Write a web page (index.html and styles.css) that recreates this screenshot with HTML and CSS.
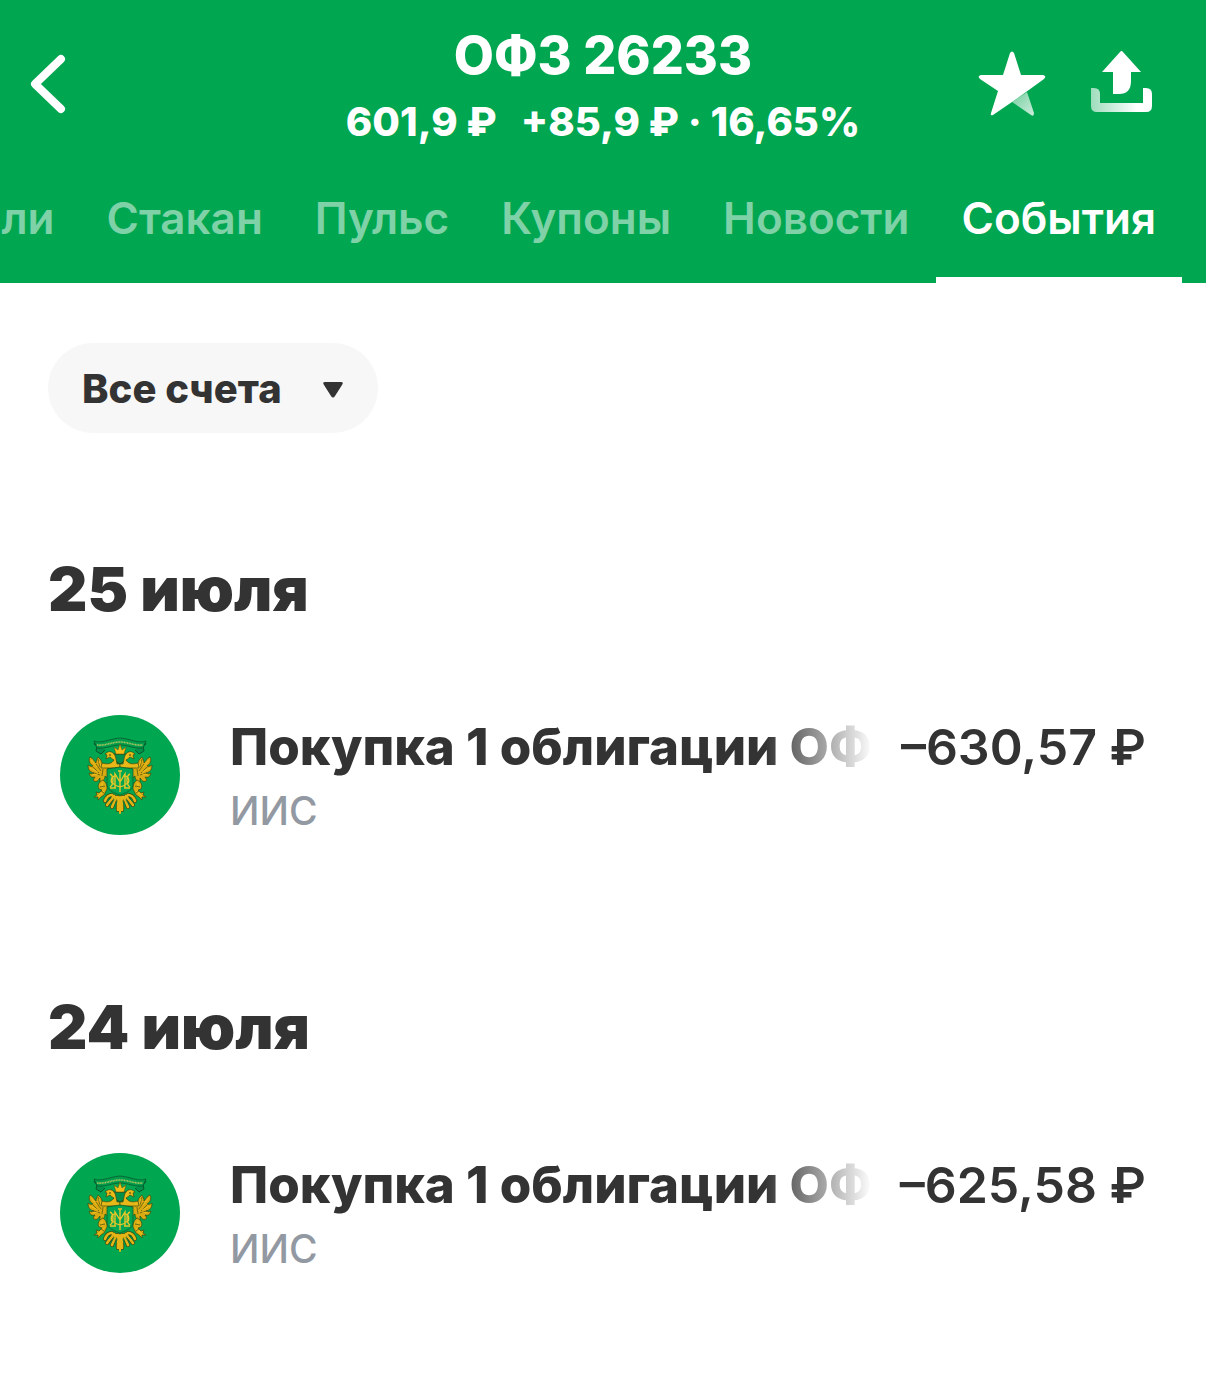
FILE: index.html
```html
<!doctype html>
<html lang="ru">
  <head>
    <meta charset="UTF-8" />
    <meta name="viewport" content="width=device-width, initial-scale=1.0" />
    <title>ОФЗ 26233</title>
    <link rel="stylesheet" href="styles.css">
  </head>
  <body>
    <!-- Shared emblem, the right half mirrors the left one -->
    <svg class="sprite" aria-hidden="true">
      <defs>
        <g id="emblem-half" stroke="#3b4a12" stroke-width="0.7" stroke-linejoin="round">
          <path fill="#d9a911" d="M48 51C44 52 42 49 41 45L38 42C37 44 36 46 36 48C34 46 33 43 30 42C28 46 30 49 33 51C31 52 30 51 28 50C28 55 30 57 34 58C32 59 31 59 29 58C30 62 32 63 35 62L33 65C36 68 38 66 40 63L40 67C43 67 45 64 45 61L48 63Z" />
          <path fill="none" stroke="#4c5210" d="M36 49L41 56M33 52L39 58M34 58L40 60M38 44L40 52M43 54L42 61" />
          <path fill="none" stroke="#f5cb25" d="M31 45L37 52M30 53L38 57M32 60L38 59M39 46L42 54" />
          <path fill="#e8b718" d="M60 53C53 53 48 53 41 53L42 48C49 50 52 48 54 45C52 44 51 43 50 42L46 44L47 40L45 39C48 36 52 36 54 39C56 41 56 45 57 49L60 49Z" />
          <circle cx="50" cy="40" r="0.8" fill="#16341a" stroke="none" />
          <path fill="none" stroke="#f5cb25" d="M48 38C50 37 53 39 54 43" />
          <path fill="#dcae13" d="M43 65C39 67 37 70 39 74L42 75L39 78L36 77L37 80L34 82L38 82L38 85L41 82L44 80L46 76C48 73 47 68 43 65Z" />
          <path fill="none" stroke="#f5cb25" d="M42 68L42 73M38 81L44 76" />
          <path fill="none" stroke="#3f4a10" d="M40 72L45 71M41 76L44 78" />
          <g fill="none" stroke-linecap="round">
            <path stroke-width="4" d="M58 82L58 95M56 82L52 92M54 81L47 90M52 80C48 80 46 83 45 86" />
            <path stroke="#e3b416" stroke-width="2.6" d="M58 82L58 95M56 82L52 92M54 81L47 90M52 80C48 80 46 83 45 86" />
            <path stroke="#00873f" stroke-width="0.8" d="M57 86L55 94M54 85L50 91M51 83L46 88" />
          </g>
        </g>
        <g id="emblem">
          <path fill="#00924a" stroke="#09592d" d="M38 29C33 26 33 30 37 31L36 36L41 39L45 35M82 29C87 26 87 30 83 31L84 36L79 39L75 35" />
          <path fill="#009d4d" stroke="#09592d" stroke-width="0.8" d="M34 26C41 29 49 24 60 23C71 24 79 29 86 26L83 33C74 34 68 30 60 30C52 30 46 34 37 33Z" />
          <path fill="none" stroke="#b3c65e" stroke-width="1.6" stroke-dasharray="1.1 0.5" d="M37 30C45 31 52 27 60 27C68 27 75 31 83 30" />
          <path fill="#00904a" stroke="#21511d" d="M54 39H66L65 46L60 49L55 46Z" />
          <use href="#emblem-half" />
          <use href="#emblem-half" transform="translate(120 0) scale(-1 1)" />
          <path fill="none" stroke="#e3b416" stroke-width="2" stroke-linecap="round" d="M60 82V98" />
          <path fill="#f3bd17" stroke="#60530e" stroke-width="0.5" d="M56 39L54 32L58 35L60 29L62 35L66 32L64 39Z" />
          <path fill="#00a651" stroke="#12602a" stroke-width="0.8" d="M47 54L60 52L73 54V69C73 75 68 77 60 80C52 77 47 75 47 69Z" />
          <g fill="none" stroke="#e5c62a" stroke-width="1.4">
            <path d="M60 56V77M58 56H62M55 73V59L60 67L65 59V73M50 73H56M64 73H70" />
            <path d="M50 59C54 61 54 69 50 72M70 59C66 61 66 69 70 72M55 61C50 62 50 69 55 69M65 61C70 62 70 69 65 69M55 70C58 72 62 72 65 70" />
          </g>
        </g>
      </defs>
    </svg>

    <header class="header">
      <div class="topbar">
        <button class="icon-button" type="button" aria-label="Назад">
          <svg width="42" height="64" viewBox="0 0 42 64">
            <path d="M33 7L7 32L33 57" fill="none" stroke="#fff" stroke-width="8" stroke-linecap="round" stroke-linejoin="round" />
          </svg>
        </button>
        <div class="heading">
          <h1 class="title">ОФЗ 26233</h1>
          <p class="quote"><span>601,9 ₽</span><span>+85,9 ₽ · 16,65%</span></p>
        </div>
        <div class="actions">
          <button class="icon-button" type="button" aria-label="В избранное">
            <svg width="68" height="68" viewBox="0 0 68 68">
              <defs>
                <linearGradient id="star-fold" x1="0" y1="0" x2="1" y2="1">
                  <stop offset="0" stop-color="#fff" stop-opacity="0.45" />
                  <stop offset="1" stop-color="#fff" stop-opacity="0.8" />
                </linearGradient>
              </defs>
              <path fill="url(#star-fold)" d="M49 42L56 63Q56 67 53 65L34 52Z" />
              <path fill="#fff" d="M32 3Q34 0 36 3L43 25H65Q69 26 66 29L34 52L15 65Q12 66 13 63L20 41L2 29Q-1 26 3 25H25Z" />
            </svg>
          </button>
          <button class="icon-button" type="button" aria-label="Поделиться">
            <svg width="64" height="68" viewBox="0 0 64 68">
              <defs>
                <linearGradient id="tray" x1="0" y1="0" x2="1" y2="0">
                  <stop offset="0" stop-color="#fff" stop-opacity="0.62" />
                  <stop offset="0.75" stop-color="#fff" />
                </linearGradient>
              </defs>
              <path fill="url(#tray)" d="M1 38H4Q10 38 10 44V53H53V38H56Q62 38 62 44V56Q62 62 56 62H7Q1 62 1 56Z" />
              <path fill="#fff" d="M30 2Q31.500 0 33 2L51 22H41V31Q41 44 29 44H23V22H12Z" />
            </svg>
          </button>
        </div>
      </div>
      <nav class="tabs">
        <a class="tab" href="#">ли</a>
        <a class="tab" href="#">Стакан</a>
        <a class="tab" href="#">Пульс</a>
        <a class="tab" href="#">Купоны</a>
        <a class="tab" href="#">Новости</a>
        <a class="tab tab-active" href="#" aria-current="page">События</a>
      </nav>
    </header>

    <main class="content">
      <div class="filter">
        <select class="filter-select" aria-label="Счет">
          <option>Все счета</option>
        </select>
        <svg class="filter-arrow" width="22" height="18" viewBox="0 0 22 18" aria-hidden="true">
          <path fill="#333" d="M3 1H19Q22 1 20 4L13 15Q11 18 9 15L2 4Q0 1 3 1Z" />
        </svg>
      </div>

      <section class="day">
        <h2 class="day-title">25 июля</h2>
        <article class="event">
          <svg class="event-logo" viewBox="0 0 120 120" aria-hidden="true"><use href="#emblem" /></svg>
          <div class="event-info">
            <h3 class="event-name">Покупка 1 облигации ОФ</h3>
            <p class="event-account">ИИС</p>
          </div>
          <p class="event-amount">–630,57 ₽</p>
        </article>
      </section>

      <section class="day">
        <h2 class="day-title">24 июля</h2>
        <article class="event">
          <svg class="event-logo" viewBox="0 0 120 120" aria-hidden="true"><use href="#emblem" /></svg>
          <div class="event-info">
            <h3 class="event-name">Покупка 1 облигации ОФ</h3>
            <p class="event-account">ИИС</p>
          </div>
          <p class="event-amount">–625,58 ₽</p>
        </article>
      </section>
    </main>
  </body>
</html>
```
FILE: styles.css
```css
body {
  margin: 0;
  font-family: Inter, "Liberation Sans", sans-serif;
  background-color: #fff;
  color: #333;
}

h1,
h2,
h3,
p {
  margin: 0;
}

.sprite {
  position: absolute;
  width: 0;
  height: 0;
}

.header {
  background-color: #00a650;
  color: #fff;
  overflow: hidden;
}

.topbar {
  display: grid;
  grid-template-columns: 1fr auto 1fr;
  align-items: start;
  padding: 24px 52px 0 28px;
}

.icon-button {
  display: flex;
  align-items: center;
  justify-self: start;
  height: 120px;
  padding: 0;
  border: none;
  background: none;
  cursor: pointer;
}

.heading {
  text-align: center;
  padding-left: 24px;
}

.title {
  font-size: 52px;
  line-height: 64px;
  font-weight: 800;
}

.quote {
  display: flex;
  justify-content: center;
  gap: 24px;
  font-size: 40px;
  line-height: 68px;
  font-weight: 800;
  white-space: nowrap;
}

.actions {
  display: flex;
  justify-content: flex-end;
  gap: 44px;
}

.tabs {
  display: flex;
  justify-content: flex-end;
  padding: 22px 24px 0 0;
}

.tab {
  flex: none;
  padding: 12px 26px 31px;
  border-bottom: 6px solid transparent;
  color: rgba(255, 255, 255, 0.5);
  font-size: 44px;
  line-height: 56px;
  font-weight: 600;
  text-decoration: none;
}

.tab-active {
  border-bottom-color: #fff;
  color: #fff;
}

.content {
  padding: 60px 60px 60px 48px;
}

.filter {
  display: inline-grid;
  align-items: center;
}

.filter-select,
.filter-arrow {
  grid-area: 1 / 1;
}

.filter-select {
  appearance: none;
  height: 90px;
  padding: 0 96px 0 34px;
  border: none;
  border-radius: 45px;
  background-color: #f7f7f7;
  color: #333;
  font-family: inherit;
  font-size: 40px;
  font-weight: 800;
}

.filter-arrow {
  justify-self: end;
  margin: 4px 34px 0 0;
  pointer-events: none;
}

.day {
  padding-top: 120px;
}

.day-title {
  font-size: 61px;
  line-height: 72px;
  font-weight: 900;
}

.event {
  display: flex;
  align-items: flex-start;
  padding: 90px 0 28px 12px;
}

.event-logo {
  flex: none;
  width: 120px;
  height: 120px;
  margin-right: 50px;
  border-radius: 50%;
  background-color: #00a650;
}

.event-info {
  flex: 1;
  min-width: 0;
}

.event-name {
  overflow: hidden;
  font-size: 51px;
  line-height: 64px;
  font-weight: 800;
  white-space: nowrap;
  -webkit-mask-image: linear-gradient(to left, transparent, #000 108px);
  mask-image: linear-gradient(to left, transparent, #000 108px);
}

.event-account {
  color: #9299a2;
  font-size: 39px;
  line-height: 64px;
  font-weight: 500;
}

.event-amount {
  flex: none;
  margin-left: 28px;
  font-size: 50px;
  line-height: 64px;
  font-weight: 600;
}
```
